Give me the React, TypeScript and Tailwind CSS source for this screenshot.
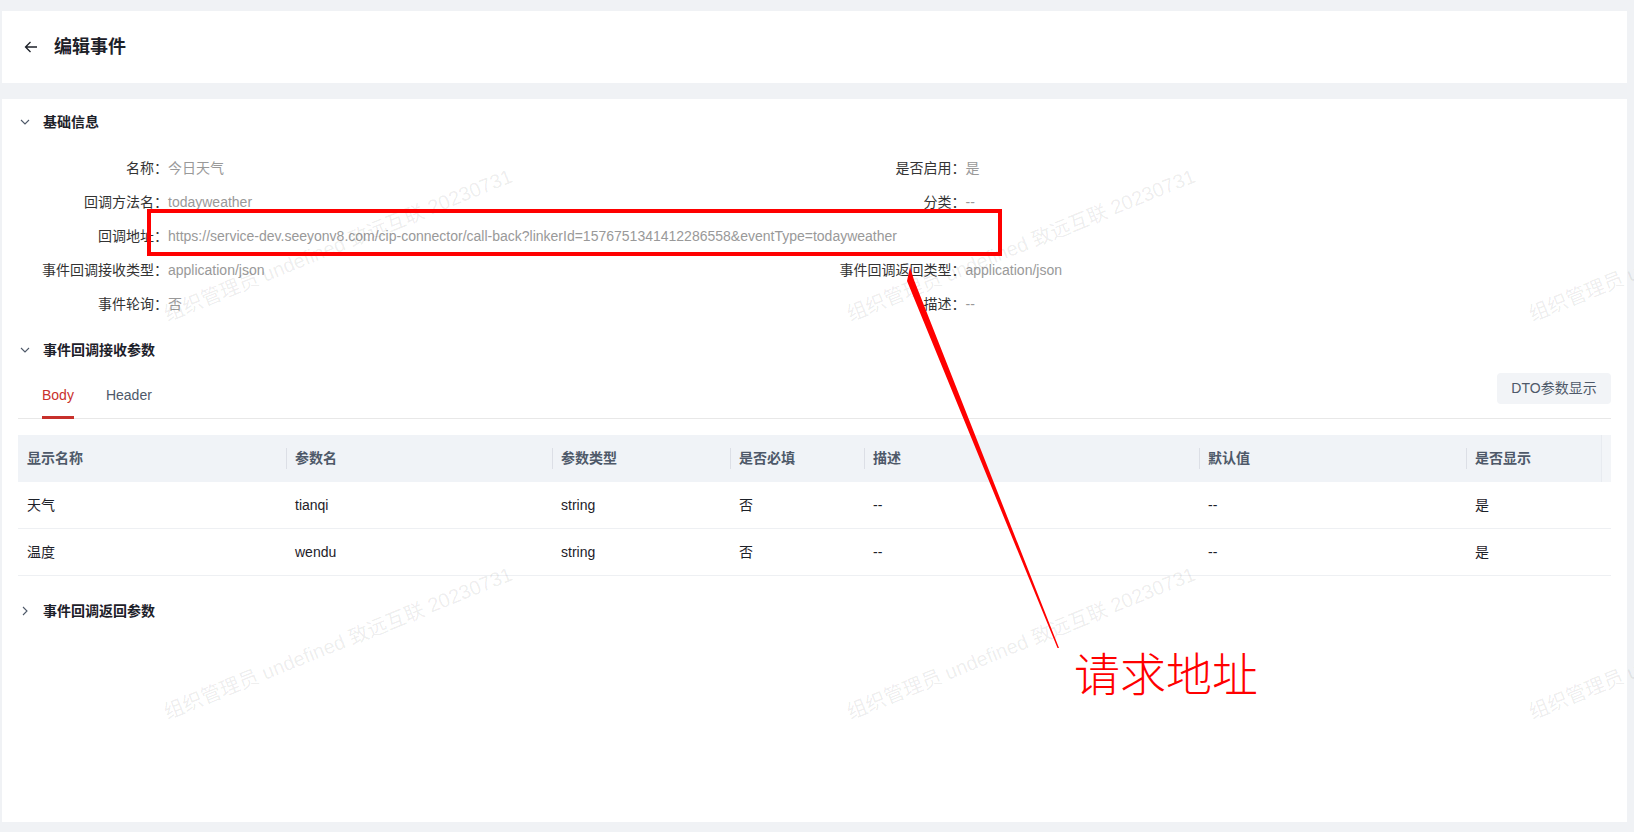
import React from "react";

const rows1 = [
  { l: "名称：", v: "今日天气", l2: "是否启用：", v2: "是" },
  { l: "回调方法名：", v: "todayweather", l2: "分类：", v2: "--" },
  {
    l: "回调地址：",
    v: "https://service-dev.seeyonv8.com/cip-connector/call-back?linkerId=1576751341412286558&eventType=todayweather",
  },
  { l: "事件回调接收类型：", v: "application/json", l2: "事件回调返回类型：", v2: "application/json" },
  { l: "事件轮询：", v: "否", l2: "描述：", v2: "--" },
];

const cols = [
  { name: "显示名称", w: "w-[268px]" },
  { name: "参数名", w: "w-[266px]" },
  { name: "参数类型", w: "w-[178px]" },
  { name: "是否必填", w: "w-[134px]" },
  { name: "描述", w: "w-[335px]" },
  { name: "默认值", w: "w-[267px]" },
  { name: "是否显示", w: "w-[135px]" },
];

const data = [
  ["天气", "tianqi", "string", "否", "--", "--", "是"],
  ["温度", "wendu", "string", "否", "--", "--", "是"],
];

function Chevron({ open }: { open: boolean }) {
  return (
    <svg width="10" height="10" viewBox="0 0 10 10" className="text-[#4e5969]">
      {open ? (
        <polyline points="1,3 5,7 9,3" fill="none" stroke="currentColor" strokeWidth="1.1" />
      ) : (
        <polyline points="3,1 7,5 3,9" fill="none" stroke="currentColor" strokeWidth="1.1" />
      )}
    </svg>
  );
}

function SectionTitle({ title, open }: { title: string; open: boolean }) {
  return (
    <div className="flex h-[46px] items-center">
      <span className="ml-[18px] flex w-[23px] items-center">
        <Chevron open={open} />
      </span>
      <span className="text-[14px] font-bold text-[#1d2129]">{title}</span>
    </div>
  );
}

function Watermark({ className }: { className: string }) {
  return (
    <div
      className={`pointer-events-none absolute -translate-x-1/2 -translate-y-1/2 -rotate-[22deg] whitespace-nowrap text-[20px] text-black/[0.08] ${className}`}
    >
      组织管理员 undefined 致远互联 20230731
    </div>
  );
}

export default function App() {
  return (
    <div className="relative h-[832px] w-full overflow-hidden bg-[#f0f2f5] pl-[2px] pr-[7px] pt-[11px] font-['Liberation_Sans','Noto_Sans_CJK_SC',sans-serif]">
      {/* page header */}
      <div className="flex h-[72px] items-center bg-white">
        <svg width="14" height="12" viewBox="0 0 14 12" className="ml-[22px] text-[#1d2129]">
          <path d="M13 6H1.5M6.5 1L1.5 6l5 5" fill="none" stroke="currentColor" strokeWidth="1.3" />
        </svg>
        <span className="ml-[16px] text-[18px] font-bold text-[#1d2129]">编辑事件</span>
      </div>

      <div className="mt-[16px] h-[723px] bg-white">
        <SectionTitle title="基础信息" open />
        <div className="mt-[6px] px-[16px] text-[14px]">
          {rows1.map((r, i) => (
            <div key={i} className="grid h-[34px] grid-cols-2 items-center">
              <div className={`flex items-center whitespace-nowrap ${r.l2 ? "" : "col-span-2"}`}>
                <span className="w-[150px] text-right text-[#333]">{r.l}</span>
                <span className="text-[#999]">{r.v}</span>
              </div>
              {r.l2 && (
                <div className="flex items-center whitespace-nowrap">
                  <span className="w-[151px] text-right text-[#333]">{r.l2}</span>
                  <span className="text-[#999]">{r.v2}</span>
                </div>
              )}
            </div>
          ))}
        </div>

        <div className="mt-[6px]">
          <SectionTitle title="事件回调接收参数" open />
        </div>

        <div className="px-[16px]">
          <div className="flex h-[46px] items-start justify-between border-b border-[#e8e8e8]">
            <div className="flex h-full gap-[32px] pl-[24px] text-[14px]">
              <div className="relative flex h-full items-center text-[#c9302c]">
                Body
                <span className="absolute bottom-[-1px] left-0 right-0 h-[3px] bg-[#c7302b]" />
              </div>
              <div className="flex h-full items-center text-[#4e5969]">Header</div>
            </div>
            <button className="h-[31px] w-[114px] rounded-[4px] bg-[#f2f4f7] text-[14px] text-[#4e5969]">
              DTO参数显示
            </button>
          </div>

          <div className="mt-[16px] text-[14px]">
            <div className="flex h-[47px] items-center bg-[#f0f3f7] font-bold text-[#4e5969]">
              {cols.map((c, i) => (
                <div key={c.name} className={`flex h-full items-center ${c.w}`}>
                  {i > 0 && <span className="h-[21px] w-px bg-[#dcdfe6]" />}
                  <span className={i > 0 ? "pl-[8px]" : "pl-[9px]"}>{c.name}</span>
                </div>
              ))}
              <div className="h-full w-[10px] border-l border-[#e8ebf0] bg-[#f3f5f8]" />
            </div>
            {data.map((r, ri) => (
              <div key={ri} className="flex h-[47px] items-center border-b border-[#eef0f3] text-[#1d2129]">
                {r.map((v, i) => (
                  <div key={i} className={`${cols[i].w} pl-[9px]`}>
                    {v}
                  </div>
                ))}
              </div>
            ))}
          </div>
        </div>

        <div className="mt-[12px]">
          <SectionTitle title="事件回调返回参数" open={false} />
        </div>
      </div>

      {/* watermarks */}
      <Watermark className="left-[338px] top-[245px]" />
      <Watermark className="left-[1021px] top-[245px]" />
      <Watermark className="left-[1703px] top-[245px]" />
      <Watermark className="left-[338px] top-[643px]" />
      <Watermark className="left-[1021px] top-[643px]" />
      <Watermark className="left-[1703px] top-[643px]" />

      {/* annotation */}
      <div className="pointer-events-none absolute left-[147px] top-[209px] h-[47px] w-[855px] border-4 border-[#ff0000]" />
      <svg className="pointer-events-none absolute left-0 top-0" width="1634" height="832">
        <polygon points="910,267 914,280 1059,648 1057.5,648 907,281" fill="#ff0000" />
      </svg>
      <div className="pointer-events-none absolute left-[1074px] top-[648px] text-[46px] font-light leading-none text-[#ff0000] font-['Noto_Sans_CJK_SC',sans-serif]">
        请求地址
      </div>
    </div>
  );
}
